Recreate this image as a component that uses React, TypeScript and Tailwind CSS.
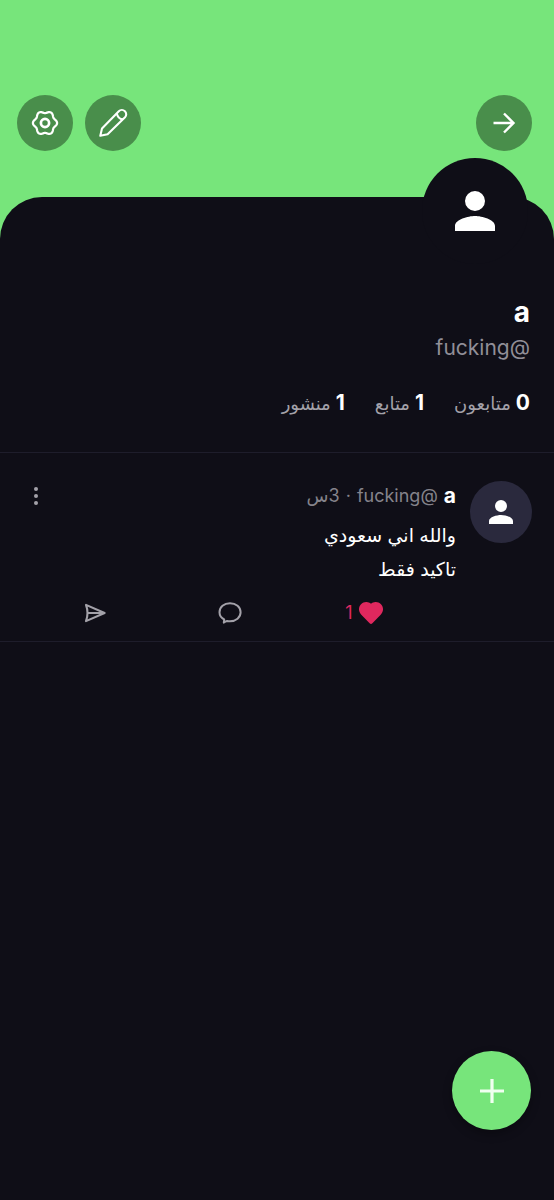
import React from "react";

const stats = [
  { count: 0, label: "متابعون" },
  { count: 1, label: "متابع" },
  { count: 1, label: "منشور" },
];

// Six-lobed outline of the settings gear, sampled around the circle.
const gearOutline = Array.from({ length: 96 }, (_, i) => {
  const angle = (i / 96) * Math.PI * 2;
  const radius = 11 + 1.1 * Math.cos(6 * angle);
  return `${(14 + radius * Math.cos(angle)).toFixed(2)},${(14 + radius * Math.sin(angle)).toFixed(2)}`;
}).join(" ");

function PersonIcon({ className }: { className: string }) {
  return (
    <svg viewBox="4 4 16 16" fill="currentColor" className={className} aria-hidden="true">
      <path d="M12 12a4 4 0 1 0 0-8 4 4 0 0 0 0 8Zm0 2c-2.67 0-8 1.34-8 4v2h16v-2c0-2.66-5.33-4-8-4Z" />
    </svg>
  );
}

function ArrowIcon() {
  return (
    <svg viewBox="0 0 24 24" className="size-6" fill="none" stroke="currentColor" strokeWidth="2.4" aria-hidden="true">
      <path d="M1.500 12h20M12 2.500l9.500 9.500-9.500 9.500" />
    </svg>
  );
}

function PencilIcon() {
  return (
    <svg viewBox="0 0 30 30" className="size-[30px]" fill="none" stroke="currentColor" strokeWidth="2.1" strokeLinejoin="round" aria-hidden="true">
      <path d="M2.300 27.700 4 20.400 20.800 3.300A4 4 0 0 1 27 9.300L9.600 26.200Z" />
      <path d="M18.800 5.400c.6 3.500 2.600 5.600 6 6" />
    </svg>
  );
}

function GearIcon() {
  return (
    <svg viewBox="0 0 28 28" className="size-7" fill="none" stroke="currentColor" strokeWidth="2.2" strokeLinejoin="round" aria-hidden="true">
      <polygon points={gearOutline} />
      <circle cx="14" cy="14" r="4.100" strokeWidth="2.700" />
    </svg>
  );
}

function SendIcon() {
  return (
    <svg viewBox="0 0 22 20" className="h-5 w-[22px]" fill="none" stroke="currentColor" strokeWidth="2.1" strokeLinejoin="round" aria-hidden="true">
      <path d="M2 1.900 20.600 10 2 18.100c2-5.400 2-10.800 0-16.200ZM3.500 10h17" />
    </svg>
  );
}

function CommentIcon() {
  return (
    <svg viewBox="0 0 24 22" className="h-[22px] w-6" fill="none" stroke="currentColor" strokeWidth="2" strokeLinejoin="round" aria-hidden="true">
      <path d="M5.800 20.600 6.200 17.500C3.300 16 1.500 13.500 1.500 10.300 1.500 5.200 6 1.200 12 1.200s10.600 4 10.600 9.100-4.600 8.900-10.600 8.900c-1 0-2-.1-2.900-.3-1 .4-2.200 1.100-3.300 1.700Z" />
    </svg>
  );
}

function HeartIcon() {
  return (
    <svg viewBox="0 0 24 22" className="h-[22px] w-6" fill="currentColor" aria-hidden="true">
      <path d="M12 22c-.5 0-.9-.2-1.400-.7L2.300 12.800C-.8 9.600-.7 5 2 2.200 4.900-.7 9.400-.6 12 1.700c2.600-2.300 7.100-2.400 10 .5 2.700 2.800 2.800 7.400-.3 10.600l-8.300 8.500c-.5.5-.9.7-1.400.7Z" />
    </svg>
  );
}

function RoundButton({ label, children }: { label: string; children: React.ReactNode }) {
  return (
    <button aria-label={label} className="flex size-14 items-center justify-center rounded-full bg-[#498e4b] text-white">
      {children}
    </button>
  );
}

export default function App() {
  return (
    <div dir="rtl" className="min-h-screen bg-[#77e57b] font-['Inter','DejaVu_Sans',sans-serif] text-white">
      <header className="flex h-[197px] items-start justify-between pt-[95px] pr-[22px] pl-[17px]">
        <RoundButton label="رجوع"><ArrowIcon /></RoundButton>
        <div className="flex gap-3">
          <RoundButton label="تعديل"><PencilIcon /></RoundButton>
          <RoundButton label="الإعدادات"><GearIcon /></RoundButton>
        </div>
      </header>

      <main className="min-h-[calc(100vh-197px)] rounded-t-[42px] bg-[#0f0e17]">
        <section className="border-b border-[#1e1d2b] px-6 pb-[34px]">
          <div className="relative z-10 -mt-[39px] mr-0.5 inline-flex size-[106px] items-center justify-center rounded-full bg-[#0f0e17] align-top">
            <PersonIcon className="size-10" />
          </div>
          <h1 className="mt-8 text-[28px] leading-8 font-bold">a</h1>
          <p className="mt-2 text-[21px] leading-6 text-[#918f97]">@fucking</p>
          <ul className="mt-[29px] flex gap-[30px] leading-7">
            {stats.map((item) => (
              <li key={item.label} className="flex items-baseline gap-[5px]">
                <b className="text-[21px]">{item.count}</b>
                <span className="text-lg text-[#a3a1a9]">{item.label}</span>
              </li>
            ))}
          </ul>
        </section>

        <article className="border-b border-[#1e1d2b] px-[22px] pt-7 pb-4">
          <div className="flex gap-[14px]">
            <div className="flex size-[62px] shrink-0 items-center justify-center rounded-full bg-[#2a293d]">
              <PersonIcon className="size-6" />
            </div>
            <div className="flex-1">
              <div className="flex h-[30px] items-center">
                <b className="text-[21px]">a</b>
                <div className="ms-1.5 flex items-baseline gap-1.5 text-lg text-[#85838b]">
                  <bdi dir="rtl">@fucking</bdi>
                  <span>·</span>
                  <bdi dir="rtl">3س</bdi>
                </div>
                <button aria-label="المزيد" className="ms-auto flex w-[27px] flex-col items-center gap-[3px] text-[#a3a1a9]">
                  <span className="size-1 rounded-full bg-current" />
                  <span className="size-1 rounded-full bg-current" />
                  <span className="size-1 rounded-full bg-current" />
                </button>
              </div>
              <p className="mt-2 text-[19px] leading-[34px]">والله اني سعودي<br />تاكيد فقط</p>
            </div>
          </div>
          <div className="mt-[14px] flex items-center justify-between pr-[149px] pl-[62px] text-[#a3a1a9]">
            <button aria-label="إعجاب" className="flex items-center gap-1 text-[#df285e]">
              <HeartIcon />
              <span className="w-3 text-lg leading-6">1</span>
            </button>
            <button aria-label="تعليق"><CommentIcon /></button>
            <button aria-label="إرسال" className="flex w-8 justify-end"><SendIcon /></button>
          </div>
        </article>
      </main>

      <button aria-label="منشور جديد" className="fixed right-[23px] bottom-[70px] flex size-[79px] items-center justify-center rounded-full bg-[#77e57b] text-[#f0fff0] shadow-[0_4px_10px_rgba(0,0,0,0.3)]">
        <svg viewBox="0 0 24 24" className="size-6" stroke="currentColor" strokeWidth="3.2" aria-hidden="true">
          <path d="M12 0v24M0 12h24" />
        </svg>
      </button>
    </div>
  );
}
